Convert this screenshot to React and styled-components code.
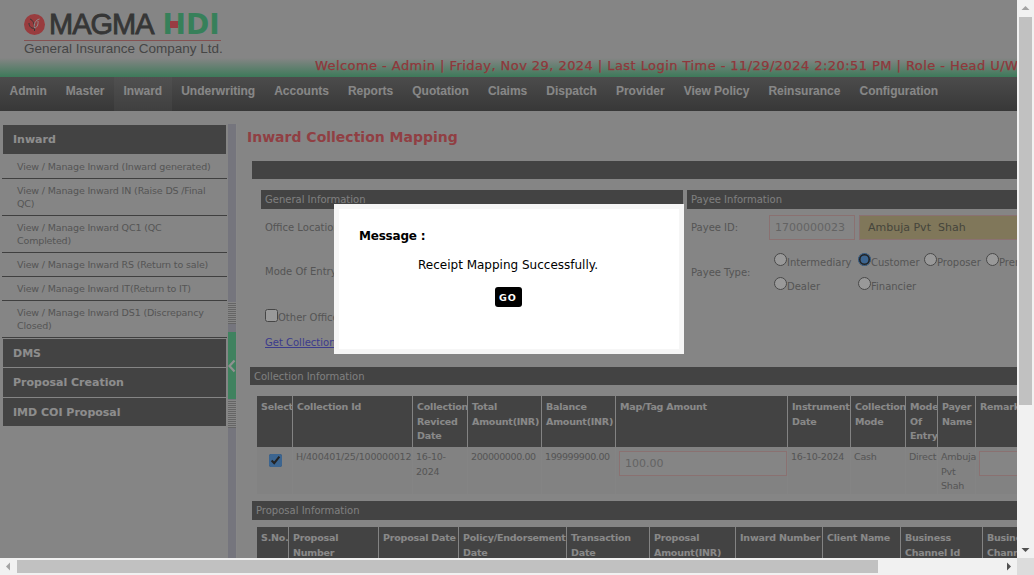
import React from "react";
import styled, { createGlobalStyle } from "styled-components";

const GlobalStyle = createGlobalStyle`
  html, body {
    margin: 0;
    padding: 0;
    overflow: hidden;
    background: #f1f1f1;
  }
  * { box-sizing: border-box; }
`;

const Window = styled.div`
  width: 1034px;
  height: 575px;
  display: grid;
  grid-template-columns: 1017px 17px;
  grid-template-rows: 558px 17px;
  font-family: "DejaVu Sans", Verdana, sans-serif;
`;

const Viewport = styled.div`
  position: relative;
  overflow: hidden;
  background: #dedede;
`;

// header with logo
const Header = styled.div`
  height: 77px;
  padding: 14px 0 0 24px;
  position: relative;
  background: linear-gradient(to bottom, #dedede 0, #dedede 58px, #67cb96 77px);
`;

const LogoRow = styled.div`
  width: 197px;
  height: 27px;
  display: flex;
  align-items: center;
  border-bottom: 1px solid #d88;
  padding-bottom: 5px;
  white-space: nowrap;
`;

const LogoMark = styled.svg`
  flex: none;
`;

const Magma = styled.span`
  flex: none;
  font-family: "Liberation Sans", Arial, sans-serif;
  font-size: 29px;
  line-height: 21px;
  color: #5a5a5a;
  margin-left: 4px;
  letter-spacing: -1px;
  -webkit-text-stroke: 0.8px #5a5a5a;
`;

const Hdi = styled.span`
  flex: none;
  position: relative;
  font-family: "DejaVu Sans", sans-serif;
  font-weight: bold;
  font-size: 28px;
  line-height: 21px;
  color: #5cd696;
  margin-left: 9px;
`;

const HdiBar = styled.i`
  position: absolute;
  left: 7px;
  top: 7px;
  width: 8px;
  height: 7px;
  background: #ff6470;
`;

const Tagline = styled.div`
  font-family: "Liberation Sans", Arial, sans-serif;
  font-size: 13.500px;
  line-height: 16px;
  color: #757575;
`;

const Welcome = styled.div`
  position: absolute;
  left: 315px;
  top: 57px;
  white-space: nowrap;
  font-size: 13px;
  line-height: 17px;
  letter-spacing: 0.44px;
  color: #ee5c64;
  -webkit-text-stroke: 0.25px #ee5c64;
`;

const Nav = styled.div`
  height: 34px;
  display: flex;
  background: linear-gradient(to bottom, #7f7f7f, #5d5d5d);
`;

const NavItem = styled.div`
  padding: 0 9.500px;
  font-family: "Liberation Sans", Arial, sans-serif;
  font-weight: bold;
  font-size: 12px;
  line-height: 28px;
  color: #e2e2e2;
  background: ${(p) => (p.$active ? "linear-gradient(to bottom, #868686, #6a6a6a)" : "none")};
`;

const Body = styled.div`
  display: flex;
  height: 447px;
`;

const Sidebar = styled.div`
  width: 228px;
  flex: none;
  padding: 14px 0 0 2px;
`;

const SideHeader = styled.div`
  height: ${(p) => p.$h}px;
  margin: ${(p) => p.$top || 0}px 1px 1px;
  width: 223px;
  padding-left: 10px;
  background: #707070;
  color: #ececec;
  font-weight: bold;
  font-size: 11px;
  display: flex;
  align-items: center;
`;

const SideLink = styled.div`
  width: 225px;
  padding: 5px 10px 5px 15px;
  border-bottom: 1px solid #696969;
  font-size: 9.500px;
  letter-spacing: -0.15px;
  line-height: 13px;
  color: #8e8e8e;
`;

const Splitter = styled.div`
  width: 9px;
  flex: none;
  margin-top: 13px;
  background: #c3c3d0;
  border-right: 1px solid #e2e2e2;
  display: flex;
  flex-direction: column;
`;

const Grip = styled.div`
  height: ${(p) => p.$h}px;
  margin-top: ${(p) => p.$top}px;
  background: repeating-linear-gradient(to bottom, #e0e0e0 0, #e0e0e0 1px, #a8a8a8 1px, #a8a8a8 2px);
`;

const Toggle = styled.div`
  height: 67px;
  margin-top: 8px;
  background: #6bd99e;
  display: flex;
  align-items: center;
  justify-content: center;
`;

const Main = styled.div`
  flex: 1;
  min-width: 0;
  overflow: hidden;
`;

const Title = styled.h1`
  margin: 16px 0 0 10px;
  font-size: 14px;
  line-height: 20px;
  font-weight: bold;
  color: #f06a70;
  white-space: nowrap;
`;

const Bar = styled.div`
  margin: ${(p) => p.$top}px 0 0 ${(p) => p.$left}px;
  height: ${(p) => p.$h}px;
  padding-left: 4px;
  background: #707070;
  color: #d4d4d4;
  font-size: 10px;
  line-height: ${(p) => p.$h + 1}px;
`;

const Columns = styled.div`
  display: flex;
  gap: 4px;
  height: 177px;
  margin: 11px 0 0 24px;
`;

const Card = styled.div`
  width: ${(p) => p.$w}px;
  flex: none;
`;

const CardTitle = styled.div`
  height: 19px;
  padding-left: 4px;
  background: #707070;
  color: #d4d4d4;
  font-size: 10px;
  line-height: 19px;
`;

const FieldRow = styled.div`
  display: flex;
  align-items: center;
  height: ${(p) => p.$h}px;
  padding-left: 4px;
  font-size: 10px;
  color: #8e8e8e;
`;

const FieldLabel = styled.div`
  width: 78px;
  flex: none;
  margin-top: ${(p) => p.$top || 0}px;
`;

const TextBox = styled.input`
  height: 25px;
  width: ${(p) => p.$w}px;
  margin-right: 4px;
  padding: 0 ${(p) => (p.$filled ? 8 : 5)}px;
  flex: none;
  font-family: inherit;
  font-size: 11px;
  color: ${(p) => (p.$filled ? "#747464" : "#a6a6a6")};
  border: 1px solid #e6bcbc;
  background: ${(p) => (p.$filled ? "#d5c696" : "#dedede")};
`;

const RadioGrid = styled.div`
  display: grid;
  grid-template-columns: 84px 66px 62px 60px;
  grid-auto-rows: 24px;
  margin: 6px 0 0 5px;
`;

const RadioLabel = styled.label`
  display: flex;
  align-items: flex-start;
  white-space: nowrap;
  font-size: 10px;
  color: #8e8e8e;
`;

const Radio = styled.input`
  margin: 0;
  width: 13px;
  height: 13px;
  accent-color: #64a8f0;
`;

const RadioText = styled.span`
  margin-top: 3.500px;
`;

const Tick = styled.input`
  margin: 0;
  width: 13px;
  height: 13px;
  accent-color: #64a8f0;
`;

const Link = styled.a`
  color: #6464e9;
  text-decoration: underline;
  font-size: 10px;
`;

const Table = styled.table`
  table-layout: fixed;
  border-collapse: separate;
  border-spacing: 0;
  margin: ${(p) => p.$top}px 0 0 20px;
  width: ${(p) => p.$w}px;
`;

const Th = styled.th`
  background: #707070;
  border-right: 1px solid #dadada;
  padding: 4px 2px 0 4px;
  height: ${(p) => p.$h}px;
  vertical-align: top;
  text-align: left;
  font-size: 9.500px;
  letter-spacing: -0.2px;
  line-height: 14.500px;
  font-weight: bold;
  color: #e4e4e4;
  overflow: hidden;
  white-space: ${(p) => (p.$nowrap ? "nowrap" : "normal")};
`;

const Td = styled.td`
  padding: 3px ${(p) => (p.$flush ? 0 : 2)}px 0 3px;
  height: 47px;
  vertical-align: top;
  font-size: 9.500px;
  letter-spacing: ${(p) => (p.$tight ? -0.4 : -0.2)}px;
  line-height: 14.500px;
  color: #8e8e8e;
  background: #d9d9d9;
  border-right: 1px solid #dcdcdc;
`;

const TickCell = styled(Td)`
  text-align: center;
  padding-top: 7px;
`;

const CellInput = styled.input`
  width: 100%;
  height: 25px;
  margin-top: 1px;
  padding: 0 5px;
  border: 1px solid #e6bcbc;
  background: #dedede;
  font-family: inherit;
  font-size: 11px;
  color: #a6a6a6;
`;

// page dimmer and message box
const Dimmer = styled.div`
  position: absolute;
  inset: 0;
  background: rgba(0, 0, 0, 0.4);
`;

const Modal = styled.div`
  position: absolute;
  left: 334px;
  top: 204px;
  width: 350px;
  height: 150px;
  padding: 19px 22px 0 20px;
  background: #fff;
  border: 5px solid #f6f6f6;
  color: #000;
`;

const ModalTitle = styled.div`
  font-size: 12px;
  letter-spacing: -0.2px;
  line-height: 16px;
  font-weight: bold;
`;

const ModalText = styled.div`
  margin-top: 13px;
  font-size: 12px;
  line-height: 16px;
  text-align: center;
`;

const GoButton = styled.button`
  display: block;
  margin: 14px auto 0;
  width: 27px;
  height: 20px;
  padding: 0;
  border: none;
  border-radius: 3px;
  background: #000;
  color: #fff;
  font-family: inherit;
  font-size: 9.500px;
  font-weight: bold;
  letter-spacing: 1px;
`;

// browser scrollbars
const Track = styled.div`
  background: #f1f1f1;
  display: flex;
  flex-direction: ${(p) => (p.$vertical ? "column" : "row")};
`;

const Arrow = styled.div`
  width: 17px;
  height: 17px;
  flex: none;
  display: flex;
  align-items: center;
  justify-content: center;
`;

const Thumb = styled.div`
  background: #c1c1c1;
  ${(p) =>
    p.$vertical
      ? `height: ${p.$size}px; margin: 0 2px;`
      : `width: ${p.$size}px; margin: 2px 0;`}
`;

const Gap = styled.div`
  flex: 1;
`;

const Corner = styled.div`
  background: #dcdcdc;
`;

const Triangle = ({ points, fill }) => (
  <svg width="9" height="9" viewBox="0 0 9 9">
    <polygon points={points} fill={fill} />
  </svg>
);

const navItems = ["Admin", "Master", "Inward", "Underwriting", "Accounts", "Reports", "Quotation", "Claims", "Dispatch", "Provider", "View Policy", "Reinsurance", "Configuration"];

const sideLinks = [
  "View / Manage Inward (Inward generated)",
  "View / Manage Inward IN (Raise DS /Final QC)",
  "View / Manage Inward QC1 (QC Completed)",
  "View / Manage Inward RS (Return to sale)",
  "View / Manage Inward IT(Return to IT)",
  "View / Manage Inward DS1 (Discrepancy Closed)",
];

const collectionCols = [
  ["Select", 36],
  ["Collection Id", 120],
  ["Collection Reviced Date", 55],
  ["Total Amount(INR)", 74],
  ["Balance Amount(INR)", 74],
  ["Map/Tag Amount", 172],
  ["Instrument Date", 63],
  ["Collection Mode", 55],
  ["Mode Of Entry", 32],
  ["Payer Name", 38],
  ["Remarks", 120],
];

const proposalCols = [
  ["S.No.", 32],
  ["Proposal Number", 90],
  ["Proposal Date", 80, true],
  ["Policy/Endorsement Date", 108],
  ["Transaction Date", 83],
  ["Proposal Amount(INR)", 86],
  ["Inward Number", 87, true],
  ["Client Name", 78],
  ["Business Channel Id", 82],
  ["Business Channel", 72],
];

const Logo = () => (
  <LogoMark width="21" height="21" viewBox="0 0 21 21">
    <circle cx="10.500" cy="10.500" r="10.500" fill="#ff6468" />
    <path d="M6 5c3 1 5 5 4.500 12M5 9c0 4 3 6 6 5" fill="none" stroke="#5a5a5a" strokeWidth="1" />
    <path d="M15.500 5c-4 1-6 5-5 9 2 0 4-3 3.500-7" fill="none" stroke="#f0f0f0" strokeWidth="1" />
  </LogoMark>
);

const App = () => {
  const sum = (cols) => cols.reduce((t, c) => t + c[1], 0);

  return (
    <>
      <GlobalStyle />
      <Window>
        <Viewport>
          <Header>
            <LogoRow>
              <Logo />
              <Magma>MAGMA</Magma>
              <Hdi>
                HDI
                <HdiBar />
              </Hdi>
            </LogoRow>
            <Tagline>General Insurance Company Ltd.</Tagline>
            <Welcome>Welcome - Admin | Friday, Nov 29, 2024 | Last Login Time - 11/29/2024 2:20:51 PM | Role - Head U/W</Welcome>
          </Header>
          <Nav>
            {navItems.map((n) => (
              <NavItem key={n} $active={n === "Inward"}>{n}</NavItem>
            ))}
          </Nav>
          <Body>
            <Sidebar>
              <SideHeader $h={29}>Inward</SideHeader>
              {sideLinks.map((l) => (
                <SideLink key={l}>{l}</SideLink>
              ))}
              <SideHeader $h={28} $top={1}>DMS</SideHeader>
              <SideHeader $h={29}>Proposal Creation</SideHeader>
              <SideHeader $h={28}>IMD COI Proposal</SideHeader>
            </Sidebar>
            <Splitter>
              <Grip $top={178} $h={22} />
              <Toggle>
                <svg width="8" height="14" viewBox="0 0 8 14">
                  <path d="M6.500 1.500L1.500 7l5 5.500" fill="none" stroke="#f2f2f2" strokeWidth="2.200" />
                </svg>
              </Toggle>
              <Grip $top={1} $h={28} />
            </Splitter>
            <Main>
              <Title>Inward Collection Mapping</Title>
              <Bar $top={14} $left={15} $h={18} />
              <Columns>
                <Card $w={422}>
                  <CardTitle>General Information</CardTitle>
                  <FieldRow $h={37}>Office Location</FieldRow>
                  <FieldRow $h={51}>Mode Of Entry</FieldRow>
                  <FieldRow $h={37}>
                    <Tick type="checkbox" readOnly />
                    <RadioText>Other Office</RadioText>
                  </FieldRow>
                  <FieldRow $h={17}>
                    <Link>Get Collection</Link>
                  </FieldRow>
                </Card>
                <Card $w={400}>
                  <CardTitle>Payee Information</CardTitle>
                  <FieldRow $h={37}>
                    <FieldLabel>Payee ID:</FieldLabel>
                    <TextBox $w={86} defaultValue="1700000023" />
                    <TextBox $w={230} $filled defaultValue="Ambuja Pvt  Shah" />
                  </FieldRow>
                  <FieldRow $h={56}>
                    <FieldLabel $top={-4}>Payee Type:</FieldLabel>
                    <RadioGrid>
                      <RadioLabel><Radio type="radio" name="p" /><RadioText>Intermediary</RadioText></RadioLabel>
                      <RadioLabel><Radio type="radio" name="p" defaultChecked /><RadioText>Customer</RadioText></RadioLabel>
                      <RadioLabel><Radio type="radio" name="p" /><RadioText>Proposer</RadioText></RadioLabel>
                      <RadioLabel><Radio type="radio" name="p" /><RadioText>Premium</RadioText></RadioLabel>
                      <RadioLabel><Radio type="radio" name="p" /><RadioText>Dealer</RadioText></RadioLabel>
                      <RadioLabel><Radio type="radio" name="p" /><RadioText>Financier</RadioText></RadioLabel>
                    </RadioGrid>
                  </FieldRow>
                </Card>
              </Columns>
              <Bar $top={0} $left={13} $h={18}>Collection Information</Bar>
              <Table $top={11} $w={sum(collectionCols)}>
                <colgroup>
                  {collectionCols.map((c) => <col key={c[0]} width={c[1]} />)}
                </colgroup>
                <thead>
                  <tr>
                    {collectionCols.map((c) => (
                      <Th key={c[0]} $h={51}>{c[0]}</Th>
                    ))}
                  </tr>
                </thead>
                <tbody>
                  <tr>
                    <TickCell><Tick type="checkbox" defaultChecked /></TickCell>
                    <Td>H/400401/25/100000012</Td>
                    <Td>16-10-2024</Td>
                    <Td $tight>200000000.00</Td>
                    <Td $tight>199999900.00</Td>
                    <Td $flush><CellInput defaultValue="100.00" /></Td>
                    <Td>16-10-2024</Td>
                    <Td>Cash</Td>
                    <Td>Direct</Td>
                    <Td>Ambuja Pvt Shah</Td>
                    <Td $flush><CellInput /></Td>
                  </tr>
                </tbody>
              </Table>
              <Bar $top={7} $left={15} $h={19}>Proposal Information</Bar>
              <Table $top={7} $w={sum(proposalCols)}>
                <colgroup>
                  {proposalCols.map((c) => <col key={c[0]} width={c[1]} />)}
                </colgroup>
                <thead>
                  <tr>
                    {proposalCols.map((c) => (
                      <Th key={c[0]} $h={40} $nowrap={c[2]}>{c[0]}</Th>
                    ))}
                  </tr>
                </thead>
              </Table>
            </Main>
          </Body>
          <Dimmer />
          <Modal>
            <ModalTitle>Message :</ModalTitle>
            <ModalText>Receipt Mapping Successfully.</ModalText>
            <GoButton>GO</GoButton>
          </Modal>
        </Viewport>
        <Track $vertical>
          <Arrow><Triangle points="4.500,2 8.500,6 0.500,6" fill="#a3a3a3" /></Arrow>
          <Thumb $vertical $size={388} />
          <Gap />
          <Arrow><Triangle points="0.500,3 8.500,3 4.500,7" fill="#505050" /></Arrow>
        </Track>
        <Track>
          <Arrow><Triangle points="2,4.500 6,0.500 6,8.500" fill="#a3a3a3" /></Arrow>
          <Thumb $size={861} />
          <Gap />
          <Arrow><Triangle points="3,0.500 7,4.500 3,8.500" fill="#505050" /></Arrow>
        </Track>
        <Corner />
      </Window>
    </>
  );
};

export default App;
